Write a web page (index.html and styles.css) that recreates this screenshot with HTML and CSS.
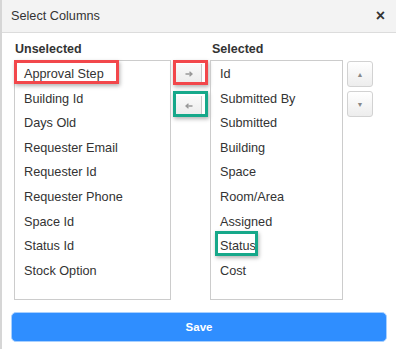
FILE: index.html
```html
<!DOCTYPE html>
<html>
<head>
	<title>Select Columns</title>
	<link rel="stylesheet" href="styles.css">
</head>
<body>
	<div class="modal">
		<div class="modal-header">
			<span class="modal-title">Select Columns</span>
			<span class="close">&times;</span>
		</div>
		<div class="modal-body">
			<div class="columns">
				<div class="col col-left">
					<div class="col-label">Unselected</div>
					<div class="list">
						<div class="item">Approval Step</div>
						<div class="item">Building Id</div>
						<div class="item">Days Old</div>
						<div class="item">Requester Email</div>
						<div class="item">Requester Id</div>
						<div class="item">Requester Phone</div>
						<div class="item">Space Id</div>
						<div class="item">Status Id</div>
						<div class="item">Stock Option</div>
						<div class="mark mark-red mark-step"></div>
					</div>
				</div>
				<div class="col col-move">
					<div class="move-btn">
						<svg width="8" height="6" viewBox="0 0 8 6"><path d="M0.5 3H7M4.5 0.8L7 3L4.5 5.2" fill="none" stroke="#999" stroke-width="1.3"/></svg>
					</div>
					<div class="move-btn">
						<svg width="8" height="6" viewBox="0 0 8 6"><path d="M7.5 3H1M3.5 0.8L1 3L3.5 5.2" fill="none" stroke="#999" stroke-width="1.3"/></svg>
					</div>
					<div class="mark mark-red mark-right"></div>
					<div class="mark mark-green mark-left"></div>
				</div>
				<div class="col col-right">
					<div class="col-label">Selected</div>
					<div class="list">
						<div class="item">Id</div>
						<div class="item">Submitted By</div>
						<div class="item">Submitted</div>
						<div class="item">Building</div>
						<div class="item">Space</div>
						<div class="item">Room/Area</div>
						<div class="item">Assigned</div>
						<div class="item">Status</div>
						<div class="item">Cost</div>
						<div class="mark mark-green mark-status"></div>
					</div>
				</div>
				<div class="col col-order">
					<div class="order-btn">&#9650;</div>
					<div class="order-btn">&#9660;</div>
				</div>
			</div>
			<button class="save">Save</button>
		</div>
	</div>
</body>
</html>
```

FILE: styles.css
```css
body {
	margin: 0;
	padding: 0;
	background-color: #d6d6d6;
	font-family: Arial, "Liberation Sans", sans-serif;
	color: #333;
}
.modal {
	margin-left: 2px;
	width: 394px;
	height: 349px;
	background-color: #fff;
}
.modal-header {
	display: flex;
	align-items: center;
	justify-content: space-between;
	height: 32px;
	padding: 0 11px 0 9px;
	background-color: #f3f3f3;
	border-bottom: 1px solid #dcdcdc;
}
.modal-title {
	font-size: 12.7px;
}
.close {
	font-size: 16px;
	font-weight: bold;
	line-height: 1;
	color: #333;
}
.modal-body {
	padding: 0 9px;
}
.columns {
	display: flex;
	padding: 8px 0 0 3px;
}
.col-label {
	font-size: 12.5px;
	font-weight: bold;
	line-height: 16px;
	height: 19px;
	padding-left: 1px;
}
.col-right .col-label {
	padding-left: 2px;
}
.list {
	position: relative;
	height: 237px;
	padding-top: 1px;
	border: 1px solid #ccc;
	font-size: 12.7px;
}
.col-left .list {
	width: 155px;
}
.col-right .list {
	width: 131px;
}
.item {
	height: 24.6px;
	line-height: 24.6px;
	padding-left: 9px;
	white-space: nowrap;
}
.col-move {
	position: relative;
	width: 39px;
	padding-top: 21px;
	box-sizing: border-box;
}
.move-btn {
	width: 25px;
	height: 19px;
	margin: 2px 0 0 5px;
	background: linear-gradient(#fafafa, #ececec);
	border-right: 1px solid #c8c8c8;
	display: flex;
	align-items: center;
	justify-content: center;
}
.move-btn + .move-btn {
	margin-top: 13px;
}
.col-order {
	padding: 20px 0 0 4px;
}
.order-btn {
	width: 24px;
	height: 24px;
	border: 1px solid #d2d2d2;
	border-radius: 3px;
	background: linear-gradient(#fff, #ededed);
	display: flex;
	align-items: center;
	justify-content: center;
	font-size: 7px;
	color: #888;
}
.order-btn + .order-btn {
	margin-top: 4px;
}
.mark {
	position: absolute;
	border: 3px solid;
	box-sizing: border-box;
	box-shadow: 1px 2px 4px rgba(0, 0, 0, 0.3);
}
.mark-red {
	border-color: #f2474b;
}
.mark-green {
	border-color: #16a88a;
}
.mark-step {
	left: -1px;
	top: -1px;
	width: 105px;
	height: 24px;
}
.mark-status {
	left: 4px;
	top: 170px;
	width: 43px;
	height: 25px;
}
.mark-right {
	left: 2px;
	top: 19px;
	width: 35px;
	height: 25px;
}
.mark-left {
	left: 2px;
	top: 50px;
	width: 35px;
	height: 26px;
}
.save {
	display: block;
	width: 100%;
	height: 30px;
	margin-top: 12px;
	border: 1px solid #a8d0ff;
	border-radius: 5px;
	background-color: #2f8eff;
	color: #fff;
	font-family: Arial, "Liberation Sans", sans-serif;
	font-size: 11.5px;
	font-weight: bold;
}
```
